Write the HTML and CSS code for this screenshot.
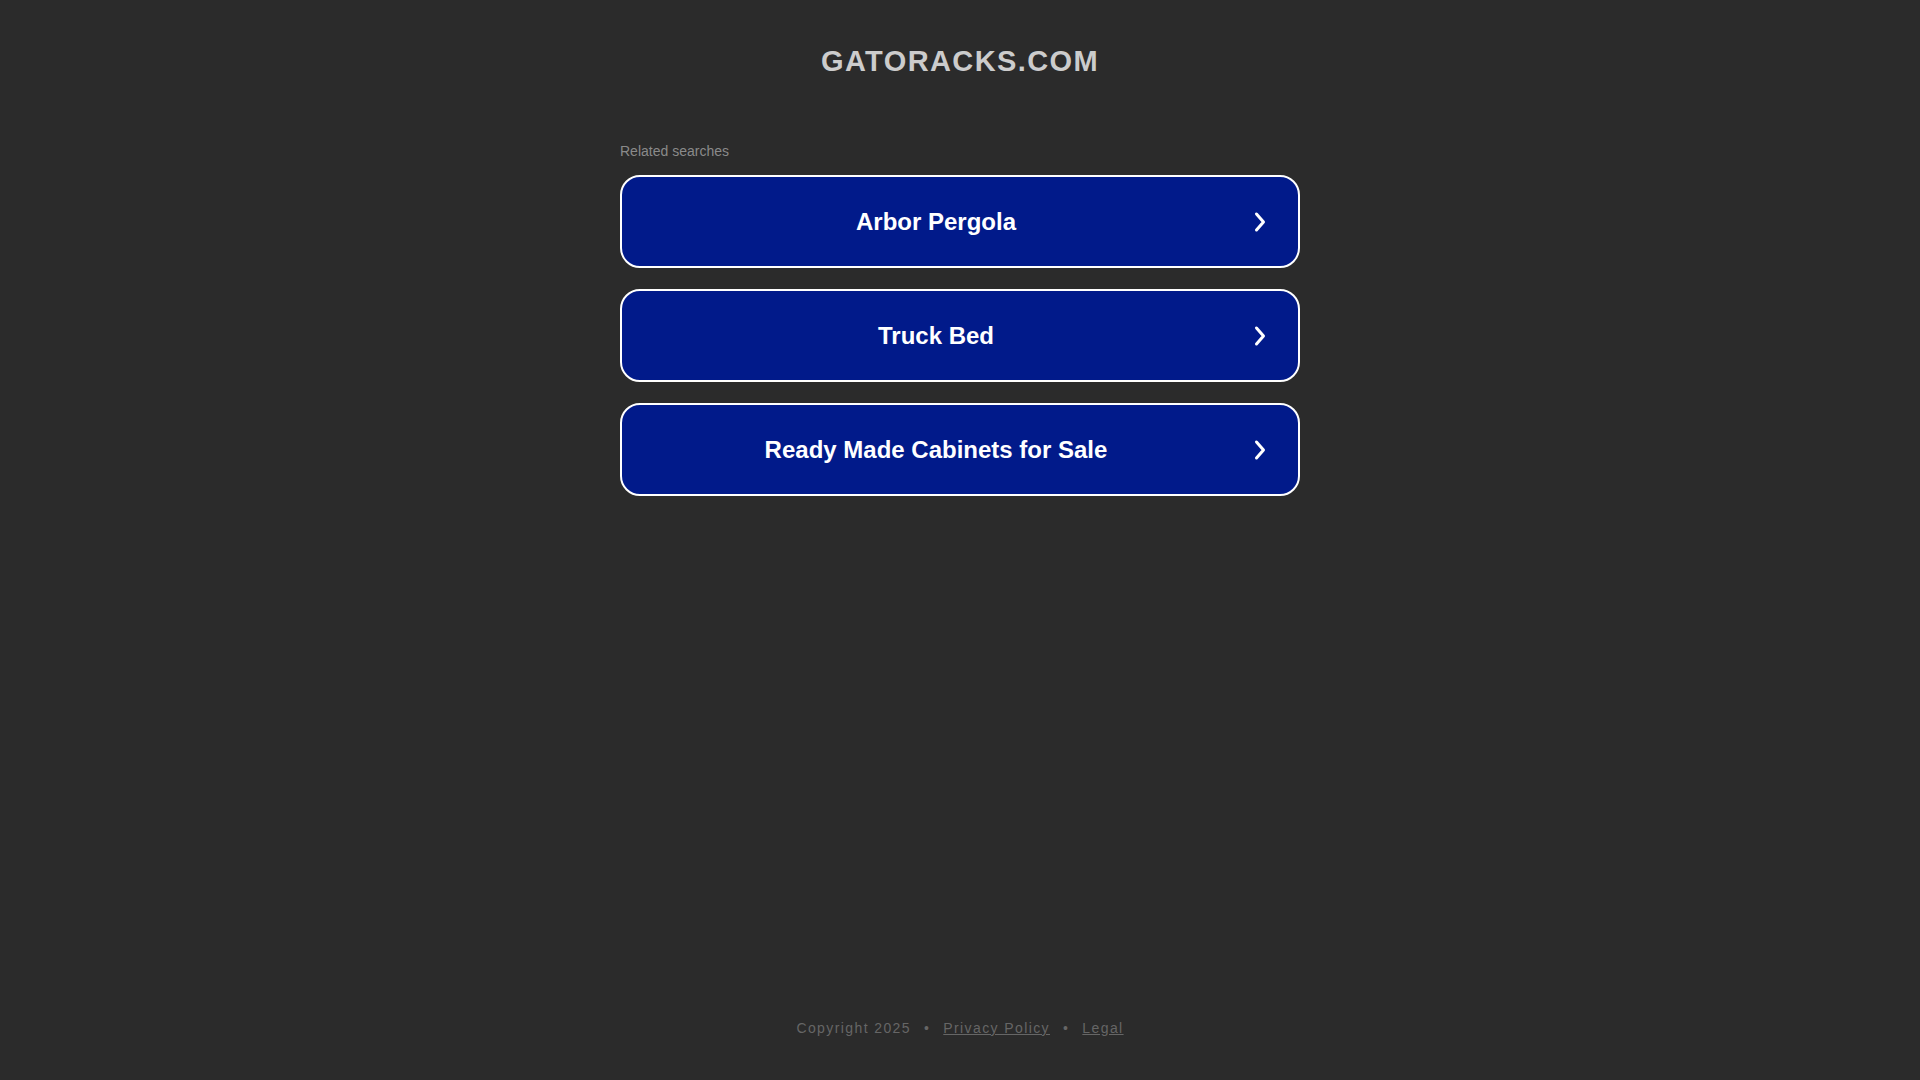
FILE: index.html
```html
<!DOCTYPE html>
<html lang="en">
<head>
    <meta charset="UTF-8">
    <meta name="viewport" content="width=device-width, initial-scale=1.0">
    <title>gatoracks.com</title>
    <link rel="stylesheet" href="styles.css">
</head>
<body>
    <div class="page">
        <header class="header">
            <h1 class="domain">gatoracks.com</h1>
        </header>

        <main class="content">
            <p class="related-title">Related searches</p>
            <div class="links">
                <a class="link" href="#">
                    <span class="link-text">Arbor Pergola</span>
                    <svg class="chevron" viewBox="0 0 24 24" width="24" height="24"><path d="M9.5 4l7 8-7 8" /></svg>
                </a>
                <a class="link" href="#">
                    <span class="link-text">Truck Bed</span>
                    <svg class="chevron" viewBox="0 0 24 24" width="24" height="24"><path d="M9.5 4l7 8-7 8" /></svg>
                </a>
                <a class="link" href="#">
                    <span class="link-text">Ready Made Cabinets for Sale</span>
                    <svg class="chevron" viewBox="0 0 24 24" width="24" height="24"><path d="M9.5 4l7 8-7 8" /></svg>
                </a>
            </div>
        </main>

        <footer class="footer">
            <span>Copyright 2025</span>
            <span class="dot">&bull;</span>
            <a href="#">Privacy Policy</a>
            <span class="dot">&bull;</span>
            <a href="#">Legal</a>
        </footer>
    </div>
</body>
</html>
```

FILE: styles.css
```css
html, body {
    margin: 0;
    padding: 0;
    height: 100%;
}
body {
    font-family: Arial, "Liberation Sans", sans-serif;
    background: #2b2b2b;
    color: #ccc;
}
.page {
    min-height: 100%;
    display: flex;
    flex-direction: column;
    align-items: center;
}
.header {
    padding-top: 43px;
}
.domain {
    margin: 0;
    font-size: 29px;
    line-height: 36px;
    font-weight: bold;
    text-transform: uppercase;
    letter-spacing: 1.4px;
    color: #ccc;
}
.content {
    width: 680px;
    margin-top: 64px;
}
.related-title {
    margin: 0 0 16px 0;
    font-size: 14px;
    line-height: 16px;
    color: #8a8a8a;
}
.links {
    display: flex;
    flex-direction: column;
    gap: 21px;
}
.link {
    position: relative;
    display: flex;
    align-items: center;
    justify-content: center;
    height: 89px;
    padding-right: 50px;
    padding-left: 2px;
    background: #011a8a;
    border: 2px solid #fff;
    border-radius: 20px;
    color: #fff;
    text-decoration: none;
}
.link-text {
    font-size: 24px;
    font-weight: bold;
}
.chevron {
    position: absolute;
    right: 27px;
    top: 50%;
    margin-top: -12px;
    fill: none;
    stroke: #fff;
    stroke-width: 3;
    stroke-linecap: round;
    stroke-linejoin: round;
}
.footer {
    margin-top: auto;
    padding-bottom: 44px;
    display: flex;
    gap: 12px;
    font-size: 14px;
    letter-spacing: 1.4px;
    color: #666;
}
.footer a {
    color: #666;
}
.dot {
    padding: 0 1px;
}
```
